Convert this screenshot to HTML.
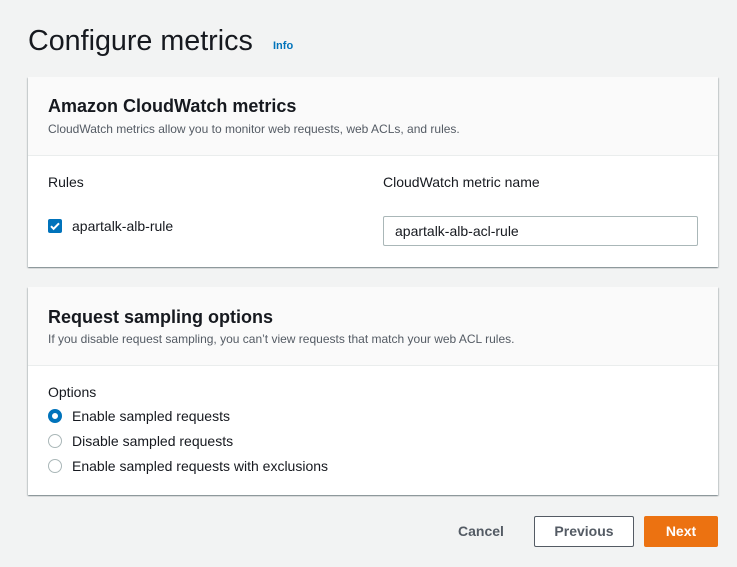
<!DOCTYPE html>
<html><head><style>
*{margin:0;padding:0;box-sizing:border-box}
body{width:737px;height:567px;background:#f2f3f3;font-family:"Liberation Sans",sans-serif;color:#16191f;position:relative;overflow:hidden}
.a{position:absolute;white-space:nowrap}
.panel{position:absolute;left:28px;width:690px;background:#fff;box-shadow:0 1px 1px rgba(0,28,36,.3),1px 1px 1px rgba(0,28,36,.15),-1px 1px 1px rgba(0,28,36,.15)}
.hd{position:absolute;left:0;top:0;width:100%;background:#fafafa;border-bottom:1px solid #eaeded}
h2{position:absolute;left:20px;font-size:18px;font-weight:bold}
.sub{position:absolute;left:20px;font-size:12px;color:#545b64}
.t{font-size:14px}
.radio{position:absolute;left:20px;width:14px;height:14px;border-radius:50%;border:1.5px solid #aab7b8;background:#fff}
.radio.on{border:4px solid #0073bb}
</style></head><body>
<div class="a" style="left:28px;top:25px;font-size:28.7px;">Configure metrics</div>
<div class="a" style="left:273px;top:40px;font-size:11px;font-weight:bold;color:#0073bb">Info</div>

<div class="panel" style="top:77px;height:190px">
 <div class="hd" style="height:79px"></div>
 <h2 style="top:19px">Amazon CloudWatch metrics</h2>
 <div class="sub a" style="top:45px">CloudWatch metrics allow you to monitor web requests, web ACLs, and rules.</div>
 <div class="a t" style="left:20px;top:97px">Rules</div>
 <div class="a t" style="left:355px;top:97px">CloudWatch metric name</div>
 <div class="a" style="left:20px;top:142px;width:14px;height:14px;background:#0073bb;border-radius:2px">
  <svg width="14" height="14" viewBox="0 0 14 14"><path d="M3 7.2l2.6 2.6L11 4.3" stroke="#fff" stroke-width="2" fill="none"/></svg></div>
 <div class="a t" style="left:44px;top:141px">apartalk-alb-rule</div>
 <div class="a" style="left:355px;top:139px;width:315px;height:30px;border:1px solid #aab7b8;border-radius:2px"></div>
 <div class="a t" style="left:367px;top:146px">apartalk-alb-acl-rule</div>
</div>

<div class="panel" style="top:287px;height:208px">
 <div class="hd" style="height:79px"></div>
 <h2 style="top:20px">Request sampling options</h2>
 <div class="sub a" style="top:45px">If you disable request sampling, you can’t view requests that match your web ACL rules.</div>
 <div class="a t" style="left:20px;top:97px">Options</div>
 <div class="radio on" style="top:122px"></div>
 <div class="a t" style="left:44px;top:121px">Enable sampled requests</div>
 <div class="radio" style="top:147px"></div>
 <div class="a t" style="left:44px;top:146px">Disable sampled requests</div>
 <div class="radio" style="top:172px"></div>
 <div class="a t" style="left:44px;top:171px">Enable sampled requests with exclusions</div>
</div>

<div class="a" style="left:458px;top:523px;font-size:14px;font-weight:bold;color:#545b64">Cancel</div>
<div class="a" style="left:534px;top:516px;width:100px;height:31px;border:1px solid #545b64;border-radius:2px;background:#fff;font-size:14px;font-weight:bold;color:#545b64;text-align:center;line-height:29px">Previous</div>
<div class="a" style="left:644px;top:516px;width:74px;height:31px;border-radius:2px;background:#ec7211;font-size:14px;font-weight:bold;color:#fff;text-align:center;line-height:31px">Next</div>
</body></html>
